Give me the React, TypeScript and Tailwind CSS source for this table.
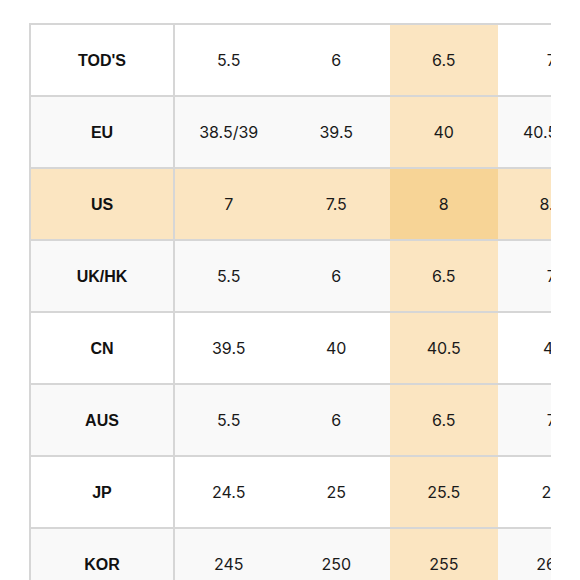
const rows = [
  { label: "TOD'S", values: ["5.5", "6", "6.5", "7"] },
  { label: "EU", values: ["38.5/39", "39.5", "40", "40.5/41"] },
  { label: "US", values: ["7", "7.5", "8", "8.5"] },
  { label: "UK/HK", values: ["5.5", "6", "6.5", "7"] },
  { label: "CN", values: ["39.5", "40", "40.5", "41"] },
  { label: "AUS", values: ["5.5", "6", "6.5", "7"] },
  { label: "JP", values: ["24.5", "25", "25.5", "26"] },
  { label: "KOR", values: ["245", "250", "255", "260"] },
];

function cellBg(row: number, col: number) {
  if (row === 2 && col === 2) return "bg-[#f7d496]";
  if (row === 2 || col === 2) return "bg-[#fbe5c1]";
  return row % 2 === 1 ? "bg-[#f9f9f9]" : "bg-white";
}

export default function App() {
  return (
    <div className="w-[580px] h-[580px] bg-white overflow-hidden pt-[23px] pl-[29px]">
      <div className="w-[522px] overflow-hidden border-t-2 border-l-2 border-[#d6d6d6]">
        <div className="w-[620px] flex flex-col">
          {rows.map((r, i) => (
            <div key={r.label} className="flex h-[72px] border-b-2 border-[#d6d6d6]">
              <div
                className={`w-[144px] shrink-0 border-r-2 border-[#d6d6d6] flex items-center justify-center pt-[2px] font-['Liberation_Sans',Arial,sans-serif] font-bold text-[16px] text-[#111] ${
                  i === 2 ? "bg-[#fbe5c1]" : i % 2 === 1 ? "bg-[#f9f9f9]" : "bg-white"
                }`}
              >
                {r.label}
              </div>
              {r.values.map((v, j) => (
                <div
                  key={j}
                  className={`w-[107.5px] shrink-0 flex items-center justify-center font-['Inter',sans-serif] text-[16px] text-[#1a1a1a] ${cellBg(i, j)}`}
                >
                  {v}
                </div>
              ))}
            </div>
          ))}
        </div>
      </div>
    </div>
  );
}
